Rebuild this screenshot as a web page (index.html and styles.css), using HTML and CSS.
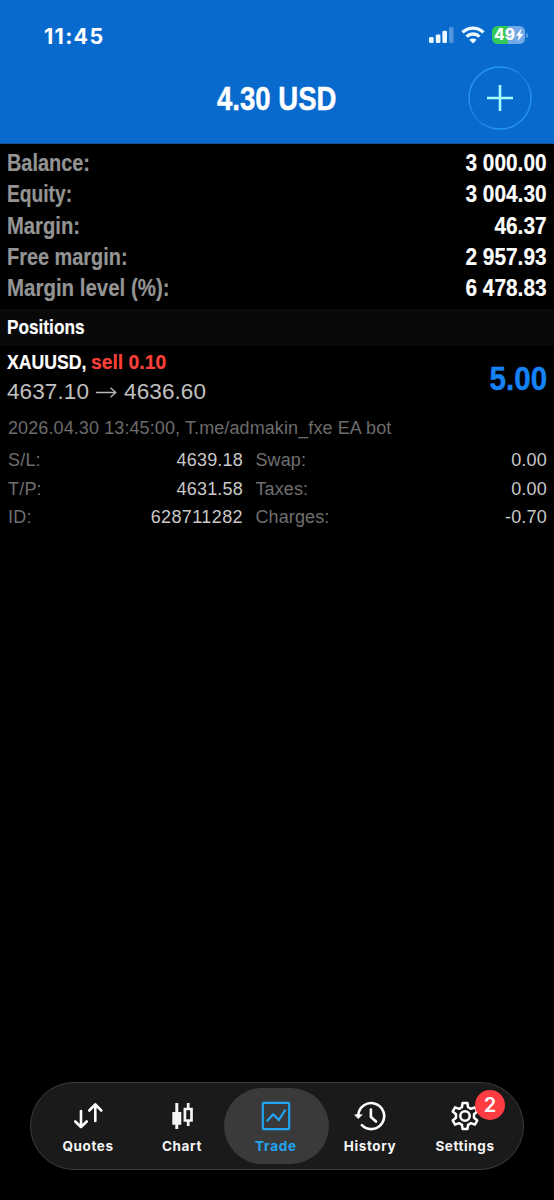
FILE: index.html
```html
<!DOCTYPE html>
<html lang="en">
<head>
<meta charset="utf-8">
<title>Trade</title>
<link rel="stylesheet" href="styles.css">
</head>
<body>
<div class="screen">
  <header class="header">
    <div class="status">
      <span class="time">11:45</span>
      <div class="status-icons">
        <svg width="25" height="17" viewBox="0 0 25 17" fill="#eef8ff"><rect x="0" y="11" width="4.6" height="6" rx="1.2"/><rect x="6.8" y="8.4" width="4.6" height="8.6" rx="1.2"/><rect x="13.4" y="4.8" width="4.6" height="12.2" rx="1.2"/><rect x="20" y="1" width="4.6" height="16" rx="1.2" opacity=".3"/></svg>
        <svg class="wifi" width="24" height="18" viewBox="0 0 24 18" fill="none" stroke="#eef8ff" stroke-width="3.3"><path d="M1.5 6.4C7.3.6 16.7.6 22.500 6.400"/><path d="M5.500 10.600C9.200 7.100 14.800 7.100 18.500 10.600"/><path d="M12 17.500L8.300 13.800C10.500 12 13.500 12 15.700 13.800Z" fill="#eef8ff" stroke="none"/></svg>
        <div class="battery"><span>49</span><svg width="9" height="14" viewBox="0 0 8 13"><path d="M5.800.5L.6 7.200H3.500L2.200 12.500L7.600 5.500H4.700Z" fill="#fff"/></svg></div>
        <i class="cap"></i>
      </div>
    </div>
    <h1 class="total"><span>4.30 USD</span></h1>
    <button class="add" aria-label="New order"><svg width="64" height="64" viewBox="0 0 64 64" fill="none"><defs><linearGradient id="ring" x1="0" y1="0" x2="1" y2="1"><stop offset="0" stop-color="#249cf4"/><stop offset=".28" stop-color="#2497ef"/><stop offset=".5" stop-color="#1479dc"/><stop offset=".75" stop-color="#249bef"/><stop offset="1" stop-color="#208de9"/></linearGradient></defs><circle cx="32" cy="32" r="31" stroke="url(#ring)" stroke-width="1.300"/><path d="M32 19V45M19 32H45" stroke="#a3fffa" stroke-width="2.600"/></svg></button>
  </header>

  <section class="account">
    <div class="row"><span class="name balance">Balance:</span><span class="amount">3 000.00</span></div>
    <div class="row"><span class="name equity">Equity:</span><span class="amount">3 004.30</span></div>
    <div class="row"><span class="name">Margin:</span><span class="amount">46.37</span></div>
    <div class="row"><span class="name free">Free margin:</span><span class="amount">2 957.93</span></div>
    <div class="row"><span class="name level">Margin level (%):</span><span class="amount">6 478.83</span></div>
  </section>

  <h2 class="section-title"><span>Positions</span></h2>

  <section class="position">
    <div class="summary">
      <div class="instrument">
        <div class="symbol"><span class="ticker">XAUUSD,</span><span class="side">sell 0.10</span></div>
        <div class="prices"><span>4637.10</span><svg width="21" height="11" viewBox="0 0 21 11" fill="none" stroke="#b8b8b8" stroke-width="1.300"><path d="M0 5.500H19.500M14.500.8L19.800 5.500L14.500 10.200"/></svg><span>4636.60</span></div>
      </div>
      <strong class="profit">5.00</strong>
    </div>
    <p class="comment">2026.04.30 13:45:00, T.me/admakin_fxe EA bot</p>
    <dl class="details">
      <dt>S/L:</dt><dd>4639.18</dd><dt>Swap:</dt><dd>0.00</dd>
      <dt>T/P:</dt><dd>4631.58</dd><dt>Taxes:</dt><dd>0.00</dd>
      <dt>ID:</dt><dd class="ident">628711282</dd><dt>Charges:</dt><dd>-0.70</dd>
    </dl>
  </section>

  <nav class="tabs">
    <a class="tab"><svg width="32" height="32" viewBox="0 0 32 32" fill="none" stroke="#fff" stroke-width="2.600" stroke-linecap="round" stroke-linejoin="round"><path d="M9 11V27M3.300 21.500L9 27.200L14.700 21.500M23.300 21V4.500M17.300 10.500L23.300 4.300L29.300 10.500"/></svg><span>Quotes</span></a>
    <a class="tab"><svg width="32" height="32" viewBox="0 0 32 32"><path d="M6.300 12H9.300V3H12.300V12H15.300V24.700H12.300V29H9.300V24.700H6.300Z" fill="#f5f5f5"/><path d="M18.900 9H25.500V20.500H18.900ZM22.200 3V9M22.200 20.500V26" fill="none" stroke="#f5f5f5" stroke-width="2.700"/></svg><span>Chart</span></a>
    <a class="tab active"><svg width="32" height="32" viewBox="0 0 32 32" fill="none" stroke="#22a5f5" stroke-width="2.200"><rect x="2.800" y="2.800" width="26.400" height="26.400" rx="1"/><path d="M6.700 21.300L13.300 14.300L18.800 20L25.600 9.500" stroke-width="2.200"/></svg><span>Trade</span></a>
    <a class="tab"><svg width="32" height="32" viewBox="0 0 32 32" fill="none" stroke="#fff" stroke-width="2.600" stroke-linecap="round"><path d="M4.200 15.500A13 13 0 1 1 7.900 25.200"/><path d="M1 14.800H8.200L4.300 18.400Z" fill="#fff" stroke-width=".8"/><path d="M16.900 9.500V17L22 21.500" stroke-linejoin="round"/></svg><span>History</span></a>
    <a class="tab settings"><svg width="32" height="32" viewBox="0 0 32 32" fill="none" stroke="#fff" stroke-width="2.500" stroke-linejoin="round"><path d="M13.600 3H18.400L19.100 7.200L21.900 8.800L25.900 7.300L28.300 11.500L25 14.200V17.800L28.300 20.500L25.900 24.700L21.900 23.200L19.100 24.800L18.400 29H13.600L12.900 24.800L10.100 23.200L6.100 24.700L3.700 20.500L7 17.800V14.200L3.700 11.500L6.100 7.300L10.100 8.800L12.900 7.200Z"/><circle cx="16" cy="16" r="4.700"/></svg><span>Settings</span><b class="badge">2</b></a>
  </nav>
</div>
</body>
</html>
```
FILE: styles.css
```css
* { box-sizing: border-box; }
body { margin: 0; background: #000; color: #fff; font-family: "Liberation Sans", Arial, sans-serif; }
.screen { width: 554px; height: 1200px; display: flex; flex-direction: column; overflow: hidden; }
.header { height: 144px; background: #096ace; position: relative; border-bottom: 1px solid #1a4f94; flex: none; }
.status { display: flex; justify-content: space-between; height: 70px; padding: 22px 26px 0 44px; }
.time { font: 700 21.5px/28px Inter, sans-serif; letter-spacing: 1.3px; }
.status-icons { display: flex; align-items: flex-start; padding-top: 4px; }
.wifi { margin-left: 7px; }
.battery { width: 33px; height: 18px; margin-left: 7px; border-radius: 5.500px; background: linear-gradient(90deg, #34c759 0 48%, #70a9e5 48%); display: flex; align-items: center; padding-left: 2px; font: 800 15.500px/18px Inter, sans-serif; }
.battery svg { flex: none; }
.cap { width: 2px; height: 5px; margin: 7px 0 0 1px; background: #559ae0; border-radius: 0 2px 2px 0; }
.total { margin: 8px 0 0; text-align: center; font-size: 34px; line-height: 40px; -webkit-text-stroke: .5px; }
.total span { display: inline-block; transform: scaleX(.81); }
.add { position: absolute; left: 468px; top: 66px; width: 64px; height: 64px; padding: 0; border: 0; background: none; }
.add svg { display: block; }

.account { height: 165px; padding: 4px 7px 0; flex: none; }
.row { display: flex; justify-content: space-between; height: 31.300px; line-height: 31.300px; font-size: 23px; font-weight: 700; -webkit-text-stroke: .2px; }
.name { color: #949494; transform: scaleX(.88); transform-origin: left; }
.balance { transform: scaleX(.865); }
.equity { transform: scaleX(.835); }
.free { transform: scaleX(.865); }
.level { transform: scaleX(.89); }
.amount { transform: scaleX(.905); transform-origin: right; }

.section-title { margin: 0; height: 37px; background: #090909; padding-left: 7px; font-size: 20.500px; line-height: 36px; flex: none; -webkit-text-stroke: .2px; }
.section-title span { display: inline-block; transform: scaleX(.84); transform-origin: left; }

.position { padding: 2px 7px 0; flex: 1; }
.summary { display: flex; justify-content: space-between; }
.symbol { height: 28px; display: flex; font-size: 21px; line-height: 27px; font-weight: 700; -webkit-text-stroke: .2px; }
.ticker { flex: none; width: 84px; transform: scaleX(.84); transform-origin: left; white-space: nowrap; }
.side { color: #fd4139; transform: scaleX(.92); transform-origin: left; }
.prices { display: flex; align-items: center; height: 32px; font-size: 22.500px; color: #c0c0c0; letter-spacing: .1px; }
.prices svg { margin: 0 7px; }
.profit { color: #1583f7; font-size: 34px; line-height: 60px; transform: scaleX(.87); transform-origin: right; -webkit-text-stroke: .4px; }
.comment { margin: 7px 0 0 1px; font-size: 18px; line-height: 26px; color: #6c6c6c; letter-spacing: .1px; white-space: nowrap; }
.details { margin: 5px 0 0 1px; display: grid; grid-template-columns: 70px 165px 80px 1fr; grid-auto-rows: 28.500px; line-height: 28px; font-size: 18px; letter-spacing: .2px; }
.details dt { color: #6f6f6f; }
.details dd { margin: 0; text-align: right; color: #c8c8c8; }
.details .ident { letter-spacing: .4px; }
.details dt:nth-of-type(even) { padding-left: 12.500px; letter-spacing: .1px; }

.tabs { width: 494px; height: 88px; margin: 0 0 30px 30px; padding: 5px 10px; display: flex; border: 1px solid #3c3c3c; border-radius: 44px; background: #1a1a1a; flex: none; }
.tab { width: 94px; height: 76px; flex: none; display: flex; flex-direction: column; align-items: center; padding-top: 12px; position: relative; color: #f5f5f5; font: 700 13.500px/18px Inter, sans-serif; letter-spacing: .6px; }
.tab svg { flex: none; margin-bottom: 5px; }
.tab.active { width: 105px; margin: 0 -5.500px; border-radius: 38px; background: #3a3a3a; color: #22a5f5; letter-spacing: .8px; }
.tab.settings { padding-left: 2px; }
.badge { position: absolute; left: 58px; top: 2px; width: 30px; height: 30px; border-radius: 50%; background: #fe3c41; color: #fff; text-align: center; font: 600 20px/30px Inter, sans-serif; letter-spacing: 0; }
```
